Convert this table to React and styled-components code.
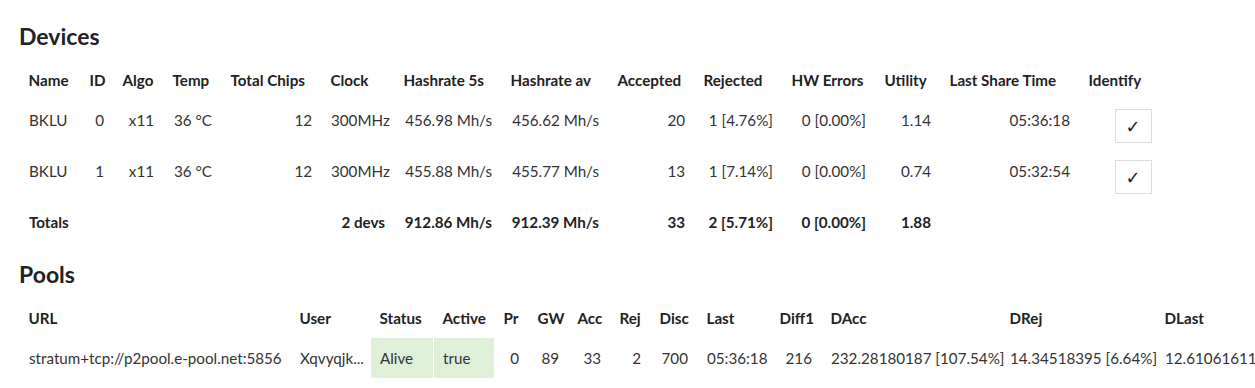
import React from "react";
import styled, { createGlobalStyle } from "styled-components";

// 페이지 기본 스타일
const GlobalStyle = createGlobalStyle`
  body {
    margin: 0;
    background: #fff;
    color: #333;
    font-family: Lato, "Liberation Sans", sans-serif;
    font-size: 15.2px;
  }
`;

// 장치 테이블 컬럼 (이름, 너비, 정렬)
const deviceCols = [
  { name: "Name", width: 61, align: "left" },
  { name: "ID", width: 33 },
  { name: "Algo", width: 50 },
  { name: "Temp", width: 58 },
  { name: "Total Chips", width: 100 },
  { name: "Clock", width: 73 },
  { name: "Hashrate 5s", width: 107 },
  { name: "Hashrate av", width: 107 },
  { name: "Accepted", width: 86 },
  { name: "Rejected", width: 88 },
  { name: "HW Errors", width: 93 },
  { name: "Utility", width: 65 },
  { name: "Last Share Time", width: 139 },
  { name: "Identify", width: 81 },
];

const devices = [
  ["BKLU", "0", "x11", "36 °C", "12", "300MHz", "456.98 Mh/s", "456.62 Mh/s", "20", "1 [4.76%]", "0 [0.00%]", "1.14", "05:36:18"],
  ["BKLU", "1", "x11", "36 °C", "12", "300MHz", "455.88 Mh/s", "455.77 Mh/s", "13", "1 [7.14%]", "0 [0.00%]", "0.74", "05:32:54"],
];

const totals = ["Totals", "", "", "", "", "2 devs", "912.86 Mh/s", "912.39 Mh/s", "33", "2 [5.71%]", "0 [0.00%]", "1.88", "", ""];

// 풀 테이블 컬럼
const poolCols = [
  { name: "URL", width: 271, align: "left" },
  { name: "User", width: 80, align: "left" },
  { name: "Status", width: 63, align: "left", ok: true },
  { name: "Active", width: 61, align: "left", ok: true },
  { name: "Pr", width: 34 },
  { name: "GW", width: 40 },
  { name: "Acc", width: 42 },
  { name: "Rej", width: 40 },
  { name: "Disc", width: 47 },
  { name: "Last", width: 73 },
  { name: "Diff1", width: 51 },
  { name: "DAcc", width: 179 },
  { name: "DRej", width: 155 },
  { name: "DLast", width: 100 },
];

const pool = [
  "stratum+tcp://p2pool.e-pool.net:5856",
  "Xqvyqjk...",
  "Alive",
  "true",
  "0",
  "89",
  "33",
  "2",
  "700",
  "05:36:18",
  "216",
  "232.28180187 [107.54%]",
  "14.34518395 [6.64%]",
  "12.61061611",
];

const sum = (cols) => cols.reduce((a, c) => a + c.width, 0);

const Page = styled.div`
  padding: 20px 0 0 19px;
`;

const Heading = styled.h2`
  margin: 0 0 8px;
  font-size: 23px;
  line-height: 32px;
  font-weight: 700;
  color: #222;
`;

const Table = styled.table`
  border-collapse: collapse;
  table-layout: fixed;
  margin-bottom: 16px;
`;

const Th = styled.th`
  padding: 8px 9px;
  line-height: 24px;
  text-align: left;
  font-weight: 700;
  color: #222;
  white-space: nowrap;
  vertical-align: top;
`;

const Td = styled.td`
  padding: 8px 9px;
  line-height: 24px;
  text-align: ${(p) => p.$align || "right"};
  font-weight: ${(p) => (p.$bold ? 700 : 400)};
  color: ${(p) => (p.$bold ? "#222" : "#333")};
  background: ${(p) => (p.$ok ? "#dff0d8" : "transparent")};
  border-left: 1px solid #fff;
  white-space: nowrap;
  vertical-align: top;
`;

const CheckButton = styled.button`
  display: inline-block;
  width: 37px;
  height: 34px;
  margin-top: 1px;
  padding: 0;
  border: 1px solid #dcdcdc;
  border-radius: 0;
  background: #fff;
  color: #222;
  font-family: "DejaVu Sans", sans-serif;
  font-size: 18px;
  font-weight: 700;
  line-height: 34px;
  vertical-align: top;
  cursor: pointer;
`;

const ColGroup = ({ cols }) => (
  <colgroup>
    {cols.map((c) => (
      <col key={c.name} style={{ width: c.width }} />
    ))}
  </colgroup>
);

const App = () => {
  return (
    <Page>
      <GlobalStyle />
      <Heading>Devices</Heading>
      <Table style={{ width: sum(deviceCols) }}>
        <ColGroup cols={deviceCols} />
        <thead>
          <tr>
            {deviceCols.map((c) => (
              <Th key={c.name}>{c.name}</Th>
            ))}
          </tr>
        </thead>
        <tbody>
          {devices.map((row, i) => (
            <tr key={i}>
              {row.map((v, j) => (
                <Td key={j} $align={deviceCols[j].align}>
                  {v}
                </Td>
              ))}
              <Td>
                <CheckButton>✓</CheckButton>
              </Td>
            </tr>
          ))}
          <tr>
            {totals.map((v, j) => (
              <Td key={j} $bold $align={deviceCols[j].align}>
                {v}
              </Td>
            ))}
          </tr>
        </tbody>
      </Table>

      <Heading>Pools</Heading>
      <Table style={{ width: sum(poolCols) }}>
        <ColGroup cols={poolCols} />
        <thead>
          <tr>
            {poolCols.map((c) => (
              <Th key={c.name}>{c.name}</Th>
            ))}
          </tr>
        </thead>
        <tbody>
          <tr>
            {pool.map((v, j) => (
              <Td key={j} $align={poolCols[j].align} $ok={poolCols[j].ok}>
                {v}
              </Td>
            ))}
          </tr>
        </tbody>
      </Table>
    </Page>
  );
};

export default App;
